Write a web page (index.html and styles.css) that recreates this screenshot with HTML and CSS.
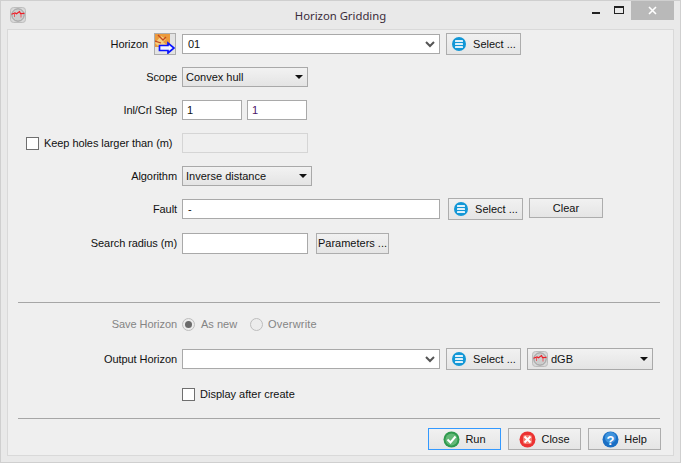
FILE: index.html
```html
<!DOCTYPE html>
<html lang="en">
<head>
<meta charset="utf-8">
<title>Horizon Gridding</title>
<link rel="stylesheet" href="styles.css">
</head>
<body>
<svg class="defs" width="0" height="0" aria-hidden="true">
  <defs>
    <symbol id="i-list" viewBox="0 0 16 16">
      <circle cx="8" cy="8" r="7" fill="#1297d6"/>
      <rect x="4" y="4" width="8" height="2" rx=".6" fill="#dff1fb"/>
      <rect x="4" y="7" width="8" height="2" rx=".6" fill="#dff1fb"/>
      <rect x="4" y="10" width="8" height="2" rx=".6" fill="#dff1fb"/>
    </symbol>
    <symbol id="i-logo" viewBox="0 0 16 16">
      <rect x=".5" y=".5" width="15" height="15" rx="3" fill="#d8d8d8" stroke="#bdbdbd"/>
      <circle cx="8" cy="8" r="6.2" fill="#cdcdcd" stroke="#9c9c9c"/>
      <path d="M1.5 7.2 5 6l1.5.8L9.5 4.6l1 2L14.5 6.4" fill="none" stroke="#ee1c25" stroke-width="1.2"/>
      <path d="M4.5 7v3M11 7v3.5" fill="none" stroke="#ee3c45" stroke-width=".8"/>
    </symbol>
  </defs>
</svg>
<div class="window">
  <header class="titlebar">
    <svg class="app-icon"><use href="#i-logo"/></svg>
    <h1 class="title">Horizon Gridding</h1>
    <div class="controls">
      <span class="ctl"><span class="min"></span></span>
      <span class="ctl"><span class="max"></span></span>
      <span class="ctl close">
        <svg width="9" height="9" viewBox="0 0 9 9"><path d="M1 1l7 7M8 1 1 8" stroke="#fff" stroke-width="1.6"/></svg>
      </span>
    </div>
  </header>
  <main class="panel">
    <div class="row first">
      <div class="lbl">
        <span>Horizon</span>
        <span class="tool">
          <svg width="20" height="20" viewBox="0 0 20 20">
            <rect x="0" y="0" width="15" height="13" fill="#eb9a3c"/>
            <path d="M0 9 6 2l5 3-3 3 5 4H3z" fill="#f6cf80"/>
            <path d="M3 1l5 5 3-3M0 7l6 2" fill="none" stroke="#c4481f" stroke-width="1.3"/>
            <path d="M4.5 11.5h8.5V9l6 5-6 5v-2.5H4.5z" fill="#f2f4ff" stroke="#0a14ff" stroke-width="1.7"/>
          </svg>
        </span>
      </div>
      <div class="combo w-long"><span>01</span><svg class="chev"><path d="M1 1l4 4 4-4" fill="none" stroke="#555" stroke-width="2"/></svg></div>
      <button class="btn select g6"><svg class="ico16"><use href="#i-list"/></svg>Select ...</button>
    </div>
    <div class="row">
      <div class="lbl">Scope</div>
      <div class="drop w-126"><span>Convex hull</span><i class="caret"></i></div>
    </div>
    <div class="row">
      <div class="lbl">Inl/Crl Step</div>
      <div class="input w-60">1</div>
      <div class="input w-60 g5 purple">1</div>
    </div>
    <div class="row">
      <div class="lbl keep"><i class="check"></i><span>Keep holes larger than (m)</span></div>
      <div class="input w-126 off"></div>
    </div>
    <div class="row">
      <div class="lbl">Algorithm</div>
      <div class="drop w-130"><span>Inverse distance</span><i class="caret"></i></div>
    </div>
    <div class="row top">
      <div class="lbl tall">Fault</div>
      <div class="input w-258 mt1 pad">-</div>
      <button class="btn select g8"><svg class="ico16"><use href="#i-list"/></svg>Select ...</button>
      <button class="btn clear g6">Clear</button>
    </div>
    <div class="row search">
      <div class="lbl">Search radius (m)</div>
      <div class="input w-126 h21"></div>
      <button class="btn params">Parameters ...</button>
    </div>
    <hr class="sep sep-a">
    <div class="row save">
      <div class="lbl dim">Save Horizon</div>
      <i class="radio on"></i><span class="opt dim">As new</span>
      <i class="radio g-r"></i><span class="opt dim wide">Overwrite</span>
    </div>
    <div class="row output">
      <div class="lbl">Output Horizon</div>
      <div class="combo w-long"><span></span><svg class="chev"><path d="M1 1l4 4 4-4" fill="none" stroke="#555" stroke-width="2"/></svg></div>
      <button class="btn select g6"><svg class="ico16"><use href="#i-list"/></svg>Select ...</button>
      <div class="drop dgb"><svg class="ico16"><use href="#i-logo"/></svg><span>dGB</span><i class="caret"></i></div>
    </div>
    <div class="row display">
      <div class="lbl"></div>
      <i class="check"></i><span class="opt">Display after create</span>
    </div>
    <hr class="sep sep-b">
    <footer class="actions">
      <button class="btn act default">
        <svg class="ico17" viewBox="0 0 17 17"><circle cx="8.5" cy="8.5" r="8" fill="#2f9a4e"/><circle cx="8.5" cy="8.5" r="6" fill="#63b877"/><path d="M4.5 8.5l3 3 5-6" fill="none" stroke="#fff" stroke-width="2"/></svg>Run
      </button>
      <button class="btn act">
        <svg class="ico17" viewBox="0 0 17 17"><circle cx="8.5" cy="8.5" r="8" fill="#ec3232"/><rect x="4" y="4" width="9" height="9" rx="2" fill="#f47c70"/><path d="M5.5 5.5l6 6M11.5 5.5l-6 6" stroke="#fff" stroke-width="2"/></svg>Close
      </button>
      <button class="btn act">
        <svg class="ico17" viewBox="0 0 17 17"><circle cx="8.5" cy="8.5" r="8" fill="#1b6fc4"/><circle cx="8.5" cy="6.5" r="5.5" fill="#3f93dd"/><text x="8.5" y="13.5" text-anchor="middle" class="q">?</text></svg>Help
      </button>
    </footer>
  </main>
</div>
</body>
</html>
```
FILE: styles.css
```css
* { box-sizing: border-box; }
html, body { margin: 0; padding: 0; height: 100%; }
body { background: #e9e9e9; font: 11px/1 "Liberation Sans", Arial, sans-serif; color: #111; overflow: hidden; }
.defs { position: absolute; }
.window { width: 681px; height: 463px; border: 1px solid #cfcfcf; background: #e9e9e9; display: flex; flex-direction: column; }
.titlebar { height: 28px; flex: none; display: flex; align-items: flex-start; position: relative; }
.app-icon { width: 16px; height: 16px; margin: 6px 0 0 9px; }
.title { position: absolute; left: 0; right: 0; margin: 7px 0 0; font: 400 11.3px/16px "Noto Sans", sans-serif; color: #3a2c3a; text-align: center; }
.controls { margin-left: auto; margin-right: 6px; display: flex; height: 19px; }
.ctl { width: 29px; height: 19px; display: flex; align-items: center; justify-content: center; }
.ctl:nth-child(1) { width: 24px; }
.ctl:nth-child(2) { width: 21px; margin-right: 2px; }
.close { width: 43px; background: #b9b9b9; }
.min { width: 8px; height: 2px; background: #222; margin-top: 5px; }
.max { width: 10px; height: 8px; border: 1px solid #222; border-top-width: 2px; margin-top: -1px; }
.panel { margin: 0 7px 0 6px; width: 667px; height: 427px; background: #efefef; border: 1px solid #d9d9d9; padding-top: 3px; display: flex; flex-direction: column; }
.row { height: 22px; margin-bottom: 11px; display: flex; align-items: center; flex: none; }
.row.top { align-items: flex-start; }
.lbl { width: 169px; margin-right: 5px; flex: none; display: flex; justify-content: flex-end; align-items: center; gap: 6px; white-space: nowrap; letter-spacing: -0.07px; }
.first .lbl { padding-right: 1px; }
.tall { height: 22px; }
.keep { justify-content: flex-start; padding-left: 18px; gap: 5px; }
.dim { color: #848484; }
.tool { width: 22px; height: 22px; border: 1px solid #adadad; background: #e3e3e3; display: flex; align-items: center; justify-content: center; }
.input, .combo { height: 20px; background: #fff; border: 1px solid #a9a9a9; display: flex; align-items: center; padding-left: 4px; flex: none; }
.combo { padding-left: 5px; justify-content: space-between; padding-right: 4px; }
.pad { padding-left: 5px; }
.w-long, .w-258 { width: 258px; }
.w-60 { width: 60px; }
.w-126 { width: 126px; }
.w-130 { width: 130px; }
.h21 { height: 21px; }
.mt1 { margin-top: 1px; }
.off { background: #efefef; border-color: #d5d5d5; }
.purple { color: #4b1468; }
.g5 { margin-left: 5px; }
.g6 { margin-left: 6px; }
.g8 { margin-left: 8px; }
.chev { width: 10px; height: 7px; }
.drop { height: 20px; border: 1px solid #a9a9a9; background: linear-gradient(#f2f2f2, #e4e4e4); display: flex; align-items: center; padding: 0 4px 0 3px; justify-content: space-between; flex: none; }
.caret { width: 0; height: 0; border: 4px solid transparent; border-top: 4px solid #111; border-bottom: 0; margin-right: 0; }
.dgb { width: 126px; height: 22px; margin-left: 6px; justify-content: flex-start; gap: 3px; padding-left: 4px; }
.dgb .caret { margin-left: auto; }
.btn { font: inherit; color: #111; height: 22px; border: 1px solid #adadad; background: linear-gradient(#f1f1f1, #e5e5e5); display: flex; align-items: center; justify-content: center; padding: 0; flex: none; }
.select { width: 75px; gap: 6px; }
.ico16 { width: 16px; height: 16px; flex: none; }
.ico17 { width: 17px; height: 17px; flex: none; }
.q { font: 700 13px "Liberation Sans", sans-serif; fill: #fff; }
.clear { width: 74px; height: 20px; }
.params { width: 73px; margin-left: 8px; height: 21px; }
.check { width: 13px; height: 13px; background: #fff; border: 1px solid #6f6f6f; flex: none; display: block; }
.radio { width: 13px; height: 13px; border-radius: 50%; border: 1px solid #bdbdbd; background: #ececec; flex: none; display: flex; align-items: center; justify-content: center; }
.radio.on::before { content: ""; width: 7px; height: 7px; border-radius: 50%; background: #6b6b6b; }
.opt { margin-left: 6px; white-space: nowrap; }
.opt.wide { margin-left: 5px; letter-spacing: 0.2px; }
.display .opt { margin-left: 5px; }
.g-r { margin-left: 13px; }
.search { margin-top: 1px; margin-bottom: 0; }
.sep { flex: none; width: 642px; height: 1px; border: 0; background: #a6a6a6; margin: 0 0 0 10px; }
.sep-a { margin-top: 48px; }
.save { margin-top: 10px; margin-bottom: 13px; }
.output { margin-bottom: 13px; }
.display { margin-bottom: 0; }
.sep-b { margin-top: 13px; }
.actions { flex: none; margin-top: 9px; padding-left: 420px; display: flex; gap: 7px; }
.act { width: 73px; gap: 5px; }
.default { border-color: #3399ff; }
```
